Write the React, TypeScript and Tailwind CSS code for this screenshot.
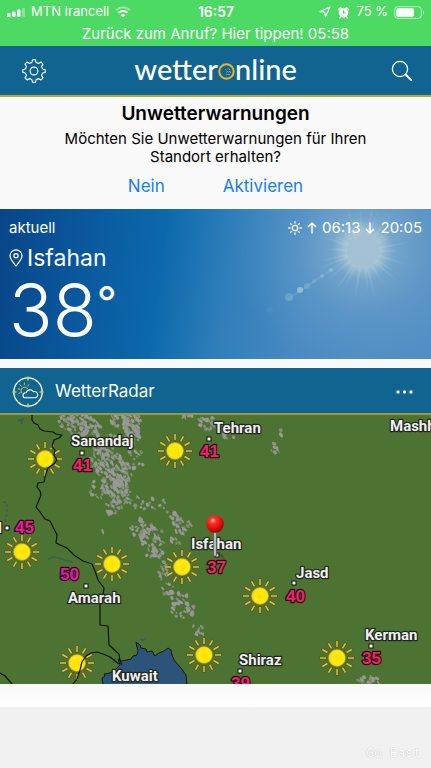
import React from "react";

type Point = [number, number];

const SUNS: Point[] = [
  [45, 44], [175, 36], [22, 137], [112, 149], [182, 152],
  [260, 181], [77, 248], [204, 240], [337, 243],
];

const RAY_ANGLES = [0, 30, 60, 90, 120, 150, 180, 210, 240, 270, 300, 330];

const CITIES: { name: string; x: number; y: number; dot?: Point }[] = [
  { name: "Sanandaj", x: 71, y: 31, dot: [82, 38] },
  { name: "Tehran", x: 214, y: 18, dot: [209, 24] },
  { name: "Mashhad", x: 390, y: 16 },
  { name: "l", x: -2, y: 118, dot: [7, 113] },
  { name: "Isfahan", x: 191, y: 134, dot: [217, 140] },
  { name: "Amarah", x: 68, y: 188, dot: [86, 171] },
  { name: "Jasd", x: 296, y: 163, dot: [294, 168] },
  { name: "Kerman", x: 365, y: 225, dot: [371, 231] },
  { name: "Shiraz", x: 239, y: 250, dot: [240, 256] },
  { name: "Kuwait", x: 112, y: 266 },
];

const TEMPS: { value: string; x: number; y: number; fill: string }[] = [
  { value: "41", x: 73, y: 56, fill: "#f3226a" },
  { value: "41", x: 200, y: 42, fill: "#f3226a" },
  { value: "45", x: 15, y: 118, fill: "#ee1a9c" },
  { value: "50", x: 60, y: 165, fill: "#e61bab" },
  { value: "37", x: 207, y: 158, fill: "#ec2a5c" },
  { value: "40", x: 286, y: 187, fill: "#f3226a" },
  { value: "35", x: 362, y: 249, fill: "#f0245c" },
  { value: "39", x: 231, y: 274, fill: "#f3226a" },
];

// Cloud fields: centre x, centre y, half width, half height, number of patches
const CLOUD_FIELDS: number[][] = [
  [67, 5, 7, 9, 34],
  [82, 4, 9, 5, 26],
  [78, 16, 10, 7, 20],
  [92, 14, 8, 9, 30],
  [120, 5, 8, 7, 42],
  [132, 8, 8, 11, 56],
  [134, 22, 7, 6, 24],
  [112, 28, 15, 7, 34],
  [100, 44, 8, 14, 48],
  [113, 50, 10, 12, 50],
  [122, 58, 9, 10, 36],
  [133, 44, 10, 9, 16],
  [98, 74, 8, 9, 18],
  [112, 70, 8, 11, 40],
  [121, 76, 8, 10, 44],
  [113, 92, 8, 7, 30],
  [135, 90, 10, 8, 16],
  [142, 114, 10, 9, 26],
  [152, 122, 11, 9, 44],
  [155, 138, 8, 5, 24],
  [176, 126, 6, 4, 6],
  [182, 111, 8, 7, 26],
  [172, 100, 7, 4, 10],
  [157, 89, 9, 5, 10],
  [104, 118, 2, 2, 2],
  [163, 156, 4, 8, 16],
  [168, 175, 5, 7, 14],
  [182, 194, 11, 8, 38],
  [180, 182, 8, 4, 8],
  [196, 216, 7, 5, 10],
  [207, 8, 8, 6, 26],
  [188, 2, 6, 2, 8],
  [229, 20, 6, 4, 9],
  [275, 33, 4, 5, 9],
  [281, 18, 1, 3, 3],
  [369, 266, 9, 4, 20],
];

function makeClouds() {
  let seed = 17;
  const rand = () => {
    seed = (seed * 16807) % 2147483647;
    return seed / 2147483647;
  };
  return CLOUD_FIELDS.flatMap(([cx, cy, rx, ry, count]) =>
    Array.from({ length: count }, () => {
      const angle = rand() * Math.PI * 2;
      const dist = Math.pow(rand(), 0.45) * 1.15;
      return {
        x: cx + Math.cos(angle) * dist * rx,
        y: cy + Math.sin(angle) * dist * ry,
        rx: 0.9 + rand() * 2,
        ry: 0.7 + rand() * 1.1,
        turn: 30 + rand() * 45,
        tone: 0.55 + rand() * 0.45,
      };
    }),
  );
}

const CLOUDS = makeClouds();

function SignalIcon() {
  return (
    <svg viewBox="0 0 18 9" className="h-[9px] w-[18px]" fill="#fff" aria-hidden="true">
      <rect x="0" y="5" width="3.5" height="4" rx="1" />
      <rect x="5" y="3.5" width="3.5" height="5.5" rx="1" />
      <rect x="10" y="1.5" width="3.5" height="7.5" rx="1" />
      <rect x="15" y="0" width="3" height="9" rx="1" opacity="0.35" />
    </svg>
  );
}

function WifiIcon() {
  return (
    <svg viewBox="0 0 16 12" className="h-3 w-4" fill="none" stroke="#fff" aria-hidden="true">
      <path d="M1 4.2a10 10 0 0 1 14 0" strokeWidth="1.8" opacity="0.45" />
      <path d="M3.4 6.8a6.6 6.6 0 0 1 9.2 0" strokeWidth="1.9" />
      <path d="M8 11.6 5.6 9.2a3.4 3.4 0 0 1 4.8 0Z" fill="#fff" stroke="none" />
    </svg>
  );
}

function LocationArrow() {
  return (
    <svg viewBox="0 0 12 12" className="size-3" fill="none" stroke="#fff" strokeWidth="1.1" strokeLinejoin="round" aria-hidden="true">
      <path d="M11 1 1 5.6l4.8.6L6.4 11Z" />
    </svg>
  );
}

function AlarmIcon() {
  return (
    <svg viewBox="0 0 14 14" className="size-[13px]" aria-hidden="true">
      <path d="M1.6 3.8 3.8 1.8M12.4 3.8 10.2 1.8" stroke="#fff" strokeWidth="1.8" strokeLinecap="round" />
      <path d="m3.8 11.6-.8 1.1m7.2-1.1.8 1.1" stroke="#fff" strokeWidth="1.2" strokeLinecap="round" />
      <circle cx="7" cy="7.4" r="5.2" fill="#fff" />
      <path d="M7 4.6v3h2.3" fill="none" stroke="#4cd964" strokeWidth="1.1" />
    </svg>
  );
}

function BatteryIcon() {
  return (
    <svg viewBox="0 0 31 13" className="h-[13px] w-[31px]" aria-hidden="true">
      <rect x="0.7" y="0.7" width="26.6" height="11.6" rx="3" fill="none" stroke="#fff" strokeOpacity="0.6" />
      <rect x="2.3" y="2.3" width="17.5" height="8.4" rx="1.4" fill="#fff" />
      <path d="M29 4.4c1.4.6 1.4 3.6 0 4.2Z" fill="#fff" opacity="0.6" />
    </svg>
  );
}

function GearIcon() {
  const teeth = 8;
  const points: string[] = [];
  for (let i = 0; i < teeth; i++) {
    const base = (i * 360) / teeth - 90;
    [[-15, 8.8], [-11, 9.6], [-8, 11.3], [8, 11.3], [11, 9.6], [15, 8.8]].forEach(([a, r]) => {
      const t = ((base + a) * Math.PI) / 180;
      points.push(`${(12 + r * Math.cos(t)).toFixed(2)},${(12 + r * Math.sin(t)).toFixed(2)}`);
    });
  }
  return (
    <svg viewBox="0 0 24 24" className="size-6" fill="none" stroke="#fff" strokeWidth="1.1" strokeLinejoin="round" aria-hidden="true">
      <polygon points={points.join(" ")} />
      <circle cx="12" cy="12" r="3.9" />
    </svg>
  );
}

function SearchIcon() {
  return (
    <svg viewBox="0 0 22 22" className="size-[22px]" fill="none" stroke="#fff" strokeLinecap="round" aria-hidden="true">
      <circle cx="9" cy="9" r="7.6" strokeWidth="1.3" />
      <path d="m14.8 14.8 5.4 5.2" strokeWidth="2" />
    </svg>
  );
}

function LogoRing() {
  return (
    <svg viewBox="0 0 17 17" className="mt-[5px] size-[17px]" fill="none" aria-hidden="true">
      <circle cx="8.5" cy="8.5" r="7.2" stroke="#eab52c" strokeWidth="2" />
      <path d="M8 11.6h4M8.4 9.6l1-1.2 1.2.8 1.4-1 .5 1.8M10 5.2v1.4M12 6l-.7 1M7.6 6.6l.8.8" stroke="#c9ae4a" strokeWidth="0.8" />
    </svg>
  );
}

function RadarIcon() {
  return (
    <svg viewBox="0 0 34 34" className="size-[34px]" fill="none" aria-hidden="true">
      <circle cx="17" cy="17" r="14.2" stroke="#fff" strokeWidth="1.3" />
      <path d="M17 1.4v4M17 28.6v4M1.4 17h4M28.6 17h4" stroke="#d8c93a" strokeWidth="1.6" />
      <path d="M11.2 18.4a3.6 3.6 0 1 1 5.6-4.4M13.4 10V7.6M10.6 11.4 8.6 9.6M9.2 14.4l-2.4-.6M9.6 17.4l-2.2 1.4M16.4 11.4l1.6-2" stroke="#d8c93a" strokeWidth="1" />
      <path d="M14.6 22.8a2.5 2.5 0 0 1-.2-5h.8a3.9 3.9 0 0 1 7.2-1 3.1 3.1 0 0 1 2.2 6Z" stroke="#fff" strokeWidth="1.1" strokeLinejoin="round" />
    </svg>
  );
}

function PlacePin() {
  return (
    <svg viewBox="0 0 14 18" className="h-[18px] w-[14px]" fill="none" stroke="#fff" strokeWidth="1.2" aria-hidden="true">
      <path d="M7 17C4.6 13.8 1 10.2 1 6.8a6 6 0 0 1 12 0C13 10.2 9.4 13.8 7 17Z" />
      <circle cx="7" cy="6.8" r="2.1" />
    </svg>
  );
}

function SunGlyph() {
  return (
    <svg viewBox="0 0 14 14" className="size-[14px]" fill="none" stroke="#fff" strokeWidth="1.3" aria-hidden="true">
      <circle cx="7" cy="7" r="2.7" />
      <path d="M7 .3v2.3M7 11.4v2.3M.3 7h2.3M11.4 7h2.3M2.3 2.3l1.6 1.6M10.1 10.1l1.6 1.6M2.3 11.7l1.6-1.6M10.1 3.9l1.6-1.6" />
    </svg>
  );
}

function ArrowGlyph({ down = false }: { down?: boolean }) {
  return (
    <svg viewBox="0 0 10 12" className={down ? "h-3 w-[10px] rotate-180" : "h-3 w-[10px]"} fill="none" stroke="#fff" strokeWidth="1.4" aria-hidden="true">
      <path d="M5 11.5V1M1 5l4-4 4 4" />
    </svg>
  );
}

function SkyBackdrop() {
  const rays = Array.from({ length: 26 }, (_, i) => ({
    angle: (i * 360) / 26 + (i % 3) * 3,
    length: 36 + ((i * 13) % 24),
  }));
  return (
    <svg viewBox="0 0 431 150" preserveAspectRatio="none" className="absolute inset-0 size-full" aria-hidden="true">
      <defs>
        <linearGradient id="sky" gradientUnits="userSpaceOnUse" x1="0" y1="20" x2="425" y2="75">
          <stop offset="0" stopColor="#084688" />
          <stop offset="0.18" stopColor="#0a569b" />
          <stop offset="0.38" stopColor="#0b69ab" />
          <stop offset="0.54" stopColor="#307fba" />
          <stop offset="0.72" stopColor="#4889c1" />
          <stop offset="1" stopColor="#508dc3" />
        </linearGradient>
        <radialGradient id="glow">
          <stop offset="0" stopColor="#a4c2d2" />
          <stop offset="0.14" stopColor="#a2c1d2" />
          <stop offset="0.24" stopColor="#8fb7d1" stopOpacity="0.6" />
          <stop offset="0.5" stopColor="#7aabcf" stopOpacity="0.35" />
          <stop offset="1" stopColor="#6ea5cf" stopOpacity="0" />
        </radialGradient>
        <radialGradient id="rays" gradientUnits="userSpaceOnUse" cx="363" cy="42" r="56">
          <stop offset="0.3" stopColor="#b4d0dd" stopOpacity="0.28" />
          <stop offset="1" stopColor="#b4d0dd" stopOpacity="0" />
        </radialGradient>
      </defs>
      <rect width="431" height="150" fill="url(#sky)" />
      <circle cx="363" cy="40" r="130" fill="url(#glow)" />
      <g fill="url(#rays)">
        {rays.map(({ angle, length }) => {
          const a = (angle * Math.PI) / 180;
          const spread = 0.1;
          const p = (t: number, r: number) => `${363 + Math.cos(t) * r},${42 + Math.sin(t) * r}`;
          return <polygon key={angle} points={`${p(a - spread, 16)} ${p(a, length)} ${p(a + spread, 16)}`} />;
        })}
      </g>
      <g fill="#9fd0dc">
        <circle cx="300" cy="81" r="3" opacity="0.7" />
        <circle cx="289" cy="88" r="4" opacity="0.3" />
        <circle cx="307" cy="77" r="3" opacity="0.25" />
        <circle cx="314" cy="72" r="2" opacity="0.25" />
        <circle cx="322" cy="67" r="2" opacity="0.45" />
        <circle cx="331" cy="61" r="2" opacity="0.5" />
        <circle cx="270" cy="101" r="3" opacity="0.08" />
      </g>
      <path d="M288 90 343 53" stroke="#9fd0dc" strokeWidth="2.5" opacity="0.15" />
    </svg>
  );
}

function RadarMap() {
  return (
    <svg viewBox="0 0 431 269" className="block h-auto w-full bg-[#4d7333]" role="img" aria-label="WetterRadar Karte">
      <defs>
        <radialGradient id="disc" cx="0.55" cy="0.5" r="0.6">
          <stop offset="0" stopColor="#ffe000" />
          <stop offset="0.6" stopColor="#ffea14" />
          <stop offset="1" stopColor="#f5cb10" />
        </radialGradient>
        <radialGradient id="ball" cx="0.38" cy="0.3" r="0.7">
          <stop offset="0" stopColor="#ffb0a4" />
          <stop offset="0.25" stopColor="#f9332a" />
          <stop offset="0.7" stopColor="#e00a0a" />
          <stop offset="1" stopColor="#990606" />
        </radialGradient>
      </defs>

      <g fill="#9b999c">
        {CLOUDS.map((c, i) => (
          <ellipse key={i} cx={c.x} cy={c.y} rx={c.rx} ry={c.ry} opacity={c.tone} transform={`rotate(${c.turn} ${c.x} ${c.y})`} />
        ))}
      </g>

      <path
        d="m103 270-1-7 3-2-1-2 6-1 6-4 4-4-2-6 4 2 5-1 4-1 2-3 4-1 1-4-1-4-1-5 4 3 1 3 5 1 1 3 5-1 3 5 4-3 5-2 4-3 3 2 1 5 2 5 7 8 5 7 1 10Z"
        fill="#2b5478"
        stroke="#101a10"
        strokeWidth="1"
      />
      <g fill="none" stroke="#2f5a63" strokeWidth="1.5" opacity="0.7">
        <path d="m18 6 5-2-2 5M48 144l6-2 5 1 5 2 9 2" />
        <path d="m110 242 6 2-3 4M140 225l5-1-3 3M3 87l4 1 0 8-2 12" strokeDasharray="3 2" />
      </g>

      {SUNS.map(([x, y]) => (
        <g key={`${x}-${y}`} transform={`translate(${x} ${y})`}>
          {RAY_ANGLES.map((a) => (
            <g key={a} transform={`rotate(${a})`}>
              <path d="M0-10.5V-17.5" stroke="#5c4a12" strokeWidth="2.6" opacity="0.7" />
              <path d="M0-11V-17" stroke="#e9bd3a" strokeWidth="1.5" />
            </g>
          ))}
          <circle r="8.5" fill="url(#disc)" stroke="#c79a12" strokeWidth="0.6" />
        </g>
      ))}

      <g fill="none" stroke="#10160c" strokeWidth="1.2" strokeLinejoin="round">
        <path d="m32 0 0 5 2 3 4 2 2 4 4 2 9 1 3 2 6 1-3 3-5 2-2 7 3 3-1 5 3 5-3 4-6 4-3 9-1 5-6 1-1 4 3 4 1 4-2 5-3 7 4 5 5 7 5 2 3 6 4 8-1 8 11 5 7 7 9 6 9 3 3 7 3 9 6 8-1 8-3 7 0 22 8 1 1 19 10 9 1 7 2 4" />
        <path d="m73 269 4-5 3-9 2-8 4-6 5-3 6-1 6 2 7 3 5 4 4 3M0 258l5 3 7 8" />
      </g>

      <g className="font-['Roboto',sans-serif] text-[15px] font-bold" fill="#efefef" stroke="#22261f" strokeWidth="2.5" strokeLinejoin="round" paintOrder="stroke">
        {CITIES.map((c) => (
          <text key={c.name} x={c.x} y={c.y}>{c.name}</text>
        ))}
      </g>
      {CITIES.map(
        (c) =>
          c.dot && (
            <rect key={c.name} x={c.dot[0] - 2} y={c.dot[1] - 2} width="4" height="4" fill="#fff" stroke="#111" strokeWidth="1" />
          ),
      )}
      <g className="font-['Liberation_Sans',sans-serif] text-[17px] font-bold" stroke="#2a0c1c" strokeWidth="2.5" strokeLinejoin="round" paintOrder="stroke">
        {TEMPS.map((t) => (
          <text key={`${t.x}-${t.y}`} x={t.x} y={t.y} fill={t.fill}>{t.value}</text>
        ))}
      </g>

      <path d="m216 139 5 1 3 4" stroke="#333" strokeWidth="2" opacity="0.5" fill="none" />
      <rect x="213.5" y="117" width="3" height="24" fill="#b9b9b9" stroke="#4a4a4a" strokeWidth="0.6" />
      <circle cx="215" cy="109" r="8.8" fill="url(#ball)" />
    </svg>
  );
}

export default function App() {
  return (
    <div className="flex min-h-screen flex-col bg-[#f0f0f0] font-['Inter','Liberation_Sans',sans-serif] text-black">
      <div className="bg-[#4cd964] pb-1 text-white">
        <div className="grid h-6 grid-cols-[1fr_auto_1fr] items-center pr-1.5 pl-[7px] text-[13px]">
          <div className="flex items-center gap-1.5">
            <SignalIcon />
            <span>MTN Irancell</span>
            <WifiIcon />
          </div>
          <span className="text-sm font-semibold">16:57</span>
          <div className="flex items-center justify-end gap-1.5">
            <LocationArrow />
            <AlarmIcon />
            <span>75 %</span>
            <BatteryIcon />
          </div>
        </div>
        <button type="button" className="block h-[18px] w-full text-center text-[15px] leading-5">
          Zurück zum Anruf? Hier tippen! 05:58
        </button>
      </div>

      <header className="grid h-[51px] grid-cols-[1fr_auto_1fr] items-center border-b-2 border-[#b5ab3c] bg-[#10648f] px-[18px]">
        <button type="button" aria-label="Einstellungen" className="ml-1 justify-self-start"><GearIcon /></button>
        <h1 className="flex items-center pb-1 font-['Lato',sans-serif] text-[29px] leading-8 font-medium text-white">
          <span>wetter</span>
          <LogoRing />
          <span>nline</span>
        </h1>
        <button type="button" aria-label="Suchen" className="justify-self-end"><SearchIcon /></button>
      </header>

      <section className="bg-[#f9f9f9] pt-[5px] pb-2.5 text-center">
        <h2 className="text-[19px] leading-6 font-semibold">Unwetterwarnungen</h2>
        <p className="mx-auto mt-1 max-w-[320px] text-[15px] leading-[18px]">
          Möchten Sie Unwetterwarnungen für Ihren Standort erhalten?
        </p>
        <div className="mt-[9px] flex h-6 items-center justify-center gap-[58px] text-[17px] text-[#157efb]">
          <button type="button">Nein</button>
          <button type="button">Aktivieren</button>
        </div>
      </section>

      <section className="relative h-[150px] overflow-hidden text-white">
        <SkyBackdrop />
        <div className="relative px-[9px] pt-[9px]">
          <div className="flex h-5 items-center justify-between text-[15px]">
            <span>aktuell</span>
            <div className="flex items-center gap-[5px]">
              <SunGlyph />
              <ArrowGlyph />
              <span>06:13</span>
              <ArrowGlyph down />
              <span>20:05</span>
            </div>
          </div>
          <div className="mt-1 flex h-8 items-center gap-1">
            <PlacePin />
            <span className="text-[23px] leading-8">Isfahan</span>
          </div>
          <p className="flex items-start text-[72px] leading-[72px] font-light">
            38<span className="text-[44px] leading-[56px] font-normal">°</span>
          </p>
        </div>
      </section>

      <section className="bg-[#f9f9f9] pt-[9px]">
        <div className="flex h-[47px] items-center border-b-2 border-[#9a9a3a] bg-[#10648f] pt-0.5 pr-[14px] pl-[11px] text-white">
          <RadarIcon />
          <h2 className="ml-2.5 text-[17px]">WetterRadar</h2>
          <button type="button" aria-label="Mehr" className="ml-auto p-1">
            <svg viewBox="0 0 17 4" className="h-1 w-[17px]" fill="#fff" aria-hidden="true">
              <circle cx="2" cy="2" r="1.7" />
              <circle cx="8.5" cy="2" r="1.7" />
              <circle cx="15" cy="2" r="1.7" />
            </svg>
          </button>
        </div>
        <RadarMap />
        <div className="h-[23px] bg-linear-to-b from-[#f9f9f9] to-white" />
      </section>

      <footer className="flex grow items-end justify-end pr-[10px] pb-[6px]">
        <span className="font-['DejaVu_Sans_Mono',monospace] text-[13px] text-white [text-shadow:0_0_1px_#a8a8a8]">Go East</span>
      </footer>
    </div>
  );
}
